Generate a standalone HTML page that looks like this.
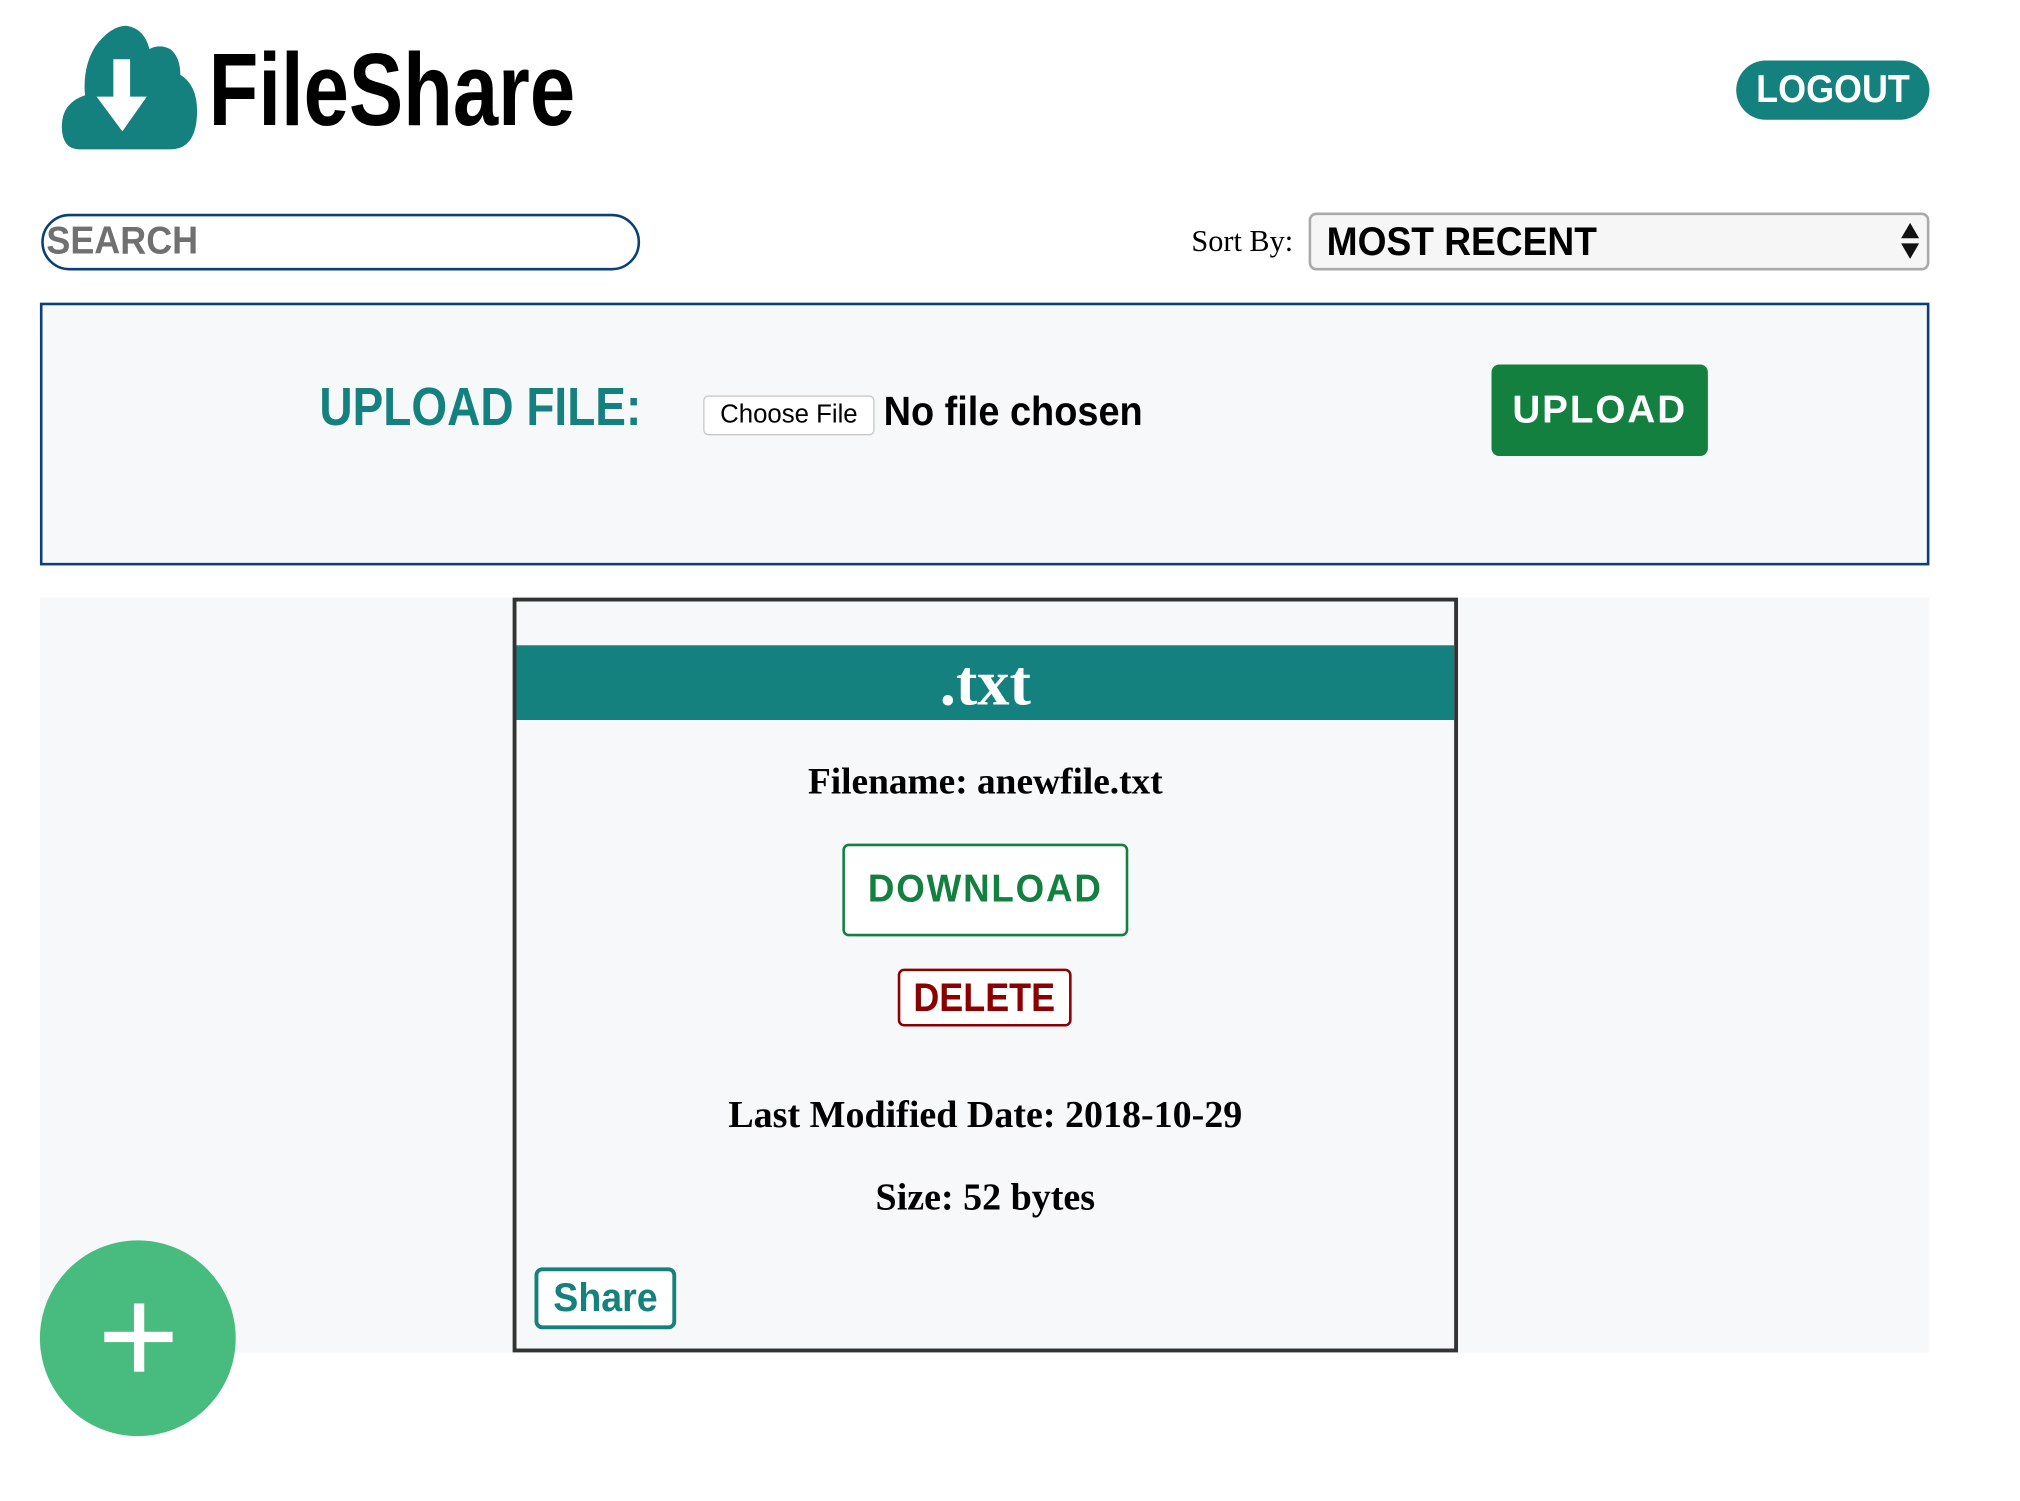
<!DOCTYPE html>
<html><head><meta charset="utf-8"><style>
html,body{margin:0;padding:0;background:#fff;width:2020px;height:1498px;overflow:hidden}
#w{position:absolute;left:0;top:0;width:1570px;height:1165px;transform:scale(1.288);transform-origin:0 0;font-family:"Liberation Sans",sans-serif}
.a{position:absolute;box-sizing:border-box}
.c{display:flex;align-items:center;justify-content:center}
.n{display:inline-block;transform-origin:left center;white-space:nowrap}
.nc{display:inline-block;white-space:nowrap}
.serif{font-family:"Liberation Serif",serif;font-weight:bold}
</style></head><body><div id="w">
<svg class="a" style="left:44px;top:16px" width="114" height="104" viewBox="44 16 114 104">
<path d="M62 116 Q48 116 48 98 Q48 80 66 74 Q64 52 74 36 Q86 20 98 20 Q112 22 116 38 Q124 34 132 38 Q140 44 140 58 Q153 66 153 86 Q153 116 132 116 Z" fill="#14817e"/>
<path d="M88 46 H101 V75 H114 L95 102 L75 75 H88 Z" fill="#fff"/>
</svg>
<div class="a" style="left:162px;top:22px;font-size:80px;font-weight:bold;line-height:96px;color:#000"><span class="n" style="transform:scaleX(.79)">FileShare</span></div>
<div class="a c" style="left:1348px;top:47px;width:150px;height:46px;border-radius:23px;background:#14817e;color:#fff;font-size:30px;font-weight:bold"><span class="nc" style="transform:scaleX(.93)">LOGOUT</span></div>
<div class="a" style="left:32px;top:166px;width:465px;height:44px;border:2px solid #0b3f7a;border-radius:22px;background:#fff;color:#707070;font-size:30px;font-weight:bold;line-height:40px;padding-left:2px"><span class="n" style="transform:scaleX(.93)">SEARCH</span></div>
<div class="a" style="left:925px;top:175px;font-family:'Liberation Serif',serif;font-size:23.5px;color:#000">Sort By:</div>
<div class="a" style="left:1016px;top:165px;width:482px;height:45px;border:2px solid #aaa;border-radius:6px;background:#f6f6f6;font-size:31px;font-weight:bold;line-height:41px;padding-left:12px;color:#000"><span class="n" style="transform:scaleX(.93)">MOST RECENT</span>
<div class="a" style="right:6px;top:6px;width:0;height:0;border-left:7px solid transparent;border-right:7px solid transparent;border-bottom:12px solid #111"></div>
<div class="a" style="right:6px;top:22px;width:0;height:0;border-left:7px solid transparent;border-right:7px solid transparent;border-top:12px solid #111"></div></div>
<div class="a" style="left:31px;top:235px;width:1467px;height:204px;border:2px solid #0b3f7a;background:#f7f8fa"></div>
<div class="a" style="left:248px;top:292px;font-size:42px;font-weight:bold;color:#14817e;line-height:48px"><span class="n" style="transform:scaleX(.85)">UPLOAD FILE:</span></div>
<div class="a c" style="left:546px;top:307px;width:133px;height:31px;border:1px solid #c8c8c8;border-radius:4px;background:#fff;font-size:20px;color:#000">Choose File</div>
<div class="a" style="left:686px;top:300px;font-size:32px;font-weight:bold;color:#000;line-height:38px"><span class="n" style="transform:scaleX(.92)">No file chosen</span></div>
<div class="a c" style="left:1158px;top:283px;width:168px;height:71px;border-radius:6px;background:#13803f;color:#fff;font-size:30px;font-weight:bold;letter-spacing:1.5px">UPLOAD</div>
<div class="a" style="left:31px;top:464px;width:1467px;height:586px;background:#f7f8fa"></div>
<div class="a" style="left:398px;top:464px;width:734px;height:586px;border:3px solid #333;background:#f7f8fa"></div>
<div class="a c serif" style="left:401px;top:501px;width:728px;height:58px;background:#14817e;color:#fff;font-size:50px">.txt</div>
<div class="a serif" style="left:401px;top:591px;width:728px;text-align:center;font-size:29px;color:#000">Filename: anewfile.txt</div>
<div class="a c" style="left:654px;top:655px;width:222px;height:72px;border:2px solid #13803f;border-radius:5px;background:#fff;color:#13803f;font-size:30px;font-weight:bold;letter-spacing:1.5px"><span class="nc" style="transform:scaleX(.95)">DOWNLOAD</span></div>
<div class="a c" style="left:697px;top:752px;width:135px;height:45px;border:2px solid #8b0000;border-radius:5px;background:#fff;color:#8b0000;font-size:31px;font-weight:bold"><span class="nc" style="transform:scaleX(.9)">DELETE</span></div>
<div class="a serif" style="left:401px;top:850px;width:728px;text-align:center;font-size:29.5px;color:#000">Last Modified Date: 2018-10-29</div>
<div class="a serif" style="left:401px;top:914px;width:728px;text-align:center;font-size:29.5px;color:#000">Size: 52 bytes</div>
<div class="a c" style="left:415px;top:984px;width:110px;height:48px;border:3px solid #14817e;border-radius:6px;background:#fff;color:#14817e;font-size:31px;font-weight:bold"><span class="nc" style="transform:scaleX(.94)">Share</span></div>
<div class="a" style="left:31px;top:963px;width:152px;height:152px;border-radius:50%;background:#48bb7e"></div>
<div class="a" style="left:81px;top:1034px;width:53px;height:8px;background:#fff"></div>
<div class="a" style="left:104px;top:1012px;width:8px;height:53px;background:#fff"></div>
</div></body></html>
